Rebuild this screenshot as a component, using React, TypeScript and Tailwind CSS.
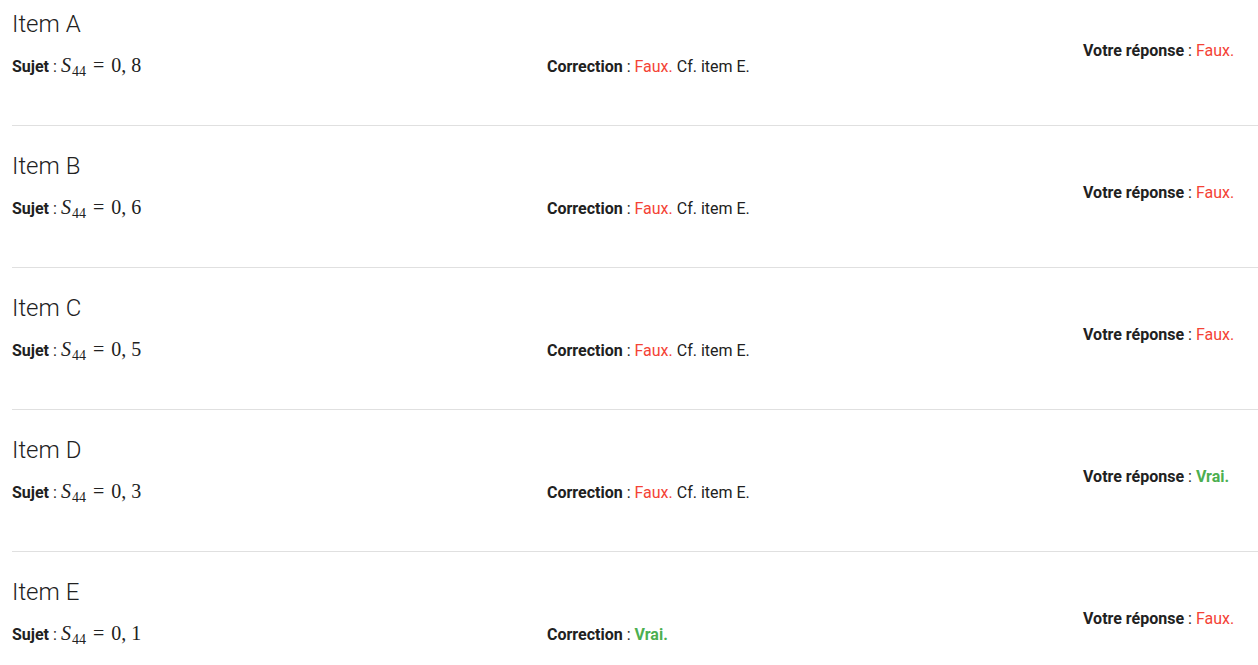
import React from "react";

type Item = { label: string; value: string; correct: boolean; corr: string; answer: boolean };

const items: Item[] = [
  { label: "A", value: "8", correct: false, corr: "Cf. item E.", answer: false },
  { label: "B", value: "6", correct: false, corr: "Cf. item E.", answer: false },
  { label: "C", value: "5", correct: false, corr: "Cf. item E.", answer: false },
  { label: "D", value: "3", correct: false, corr: "Cf. item E.", answer: true },
  { label: "E", value: "1", correct: true, corr: "", answer: false },
];

function Verdict({ ok }: { ok: boolean }) {
  return ok ? (
    <span className="font-bold text-[#4caf50]">Vrai.</span>
  ) : (
    <span className="text-[#f44336]">Faux.</span>
  );
}

function MathExpr({ v }: { v: string }) {
  return (
    <span className="inline-flex items-baseline text-[20px] leading-none text-[#212121]" style={{ fontFamily: '"Liberation Serif", "DejaVu Serif", serif' }}>
      <span className="italic">S</span>
      <span className="relative top-[4px] ml-[1px] text-[14px]">44</span>
      <span className="mx-[7px]">=</span>
      <span>0,</span>
      <span className="ml-[5px]">{v}</span>
    </span>
  );
}

export default function App() {
  return (
    <div className="min-h-screen bg-white pl-3 text-[#212121] overflow-hidden" style={{ fontFamily: 'Roboto, "Liberation Sans", sans-serif' }}>
      {items.map((it) => (
        <div key={it.label} className="mb-4 flex border-b border-[#e0e0e0] pt-2 pb-[46px]">
          <div className="w-[1071px] shrink-0">
            <div className="text-[24px] font-light leading-[32px]">Item {it.label}</div>
            <div className="mt-[15px] grid h-6 grid-cols-[535px_1fr] items-center text-[16px] leading-6">
              <div className="flex items-baseline">
                <span className="font-bold">Sujet</span>
                <span className="mx-[4px]">:</span>
                <MathExpr v={it.value} />
              </div>
              <div>
                <span className="font-bold">Correction</span> : <Verdict ok={it.correct} />
                {it.corr && <span> {it.corr}</span>}
              </div>
            </div>
          </div>
          <div className="pt-[31px] text-[16px] leading-6">
            <span className="font-bold">Votre réponse</span> : <Verdict ok={it.answer} />
          </div>
        </div>
      ))}
    </div>
  );
}
